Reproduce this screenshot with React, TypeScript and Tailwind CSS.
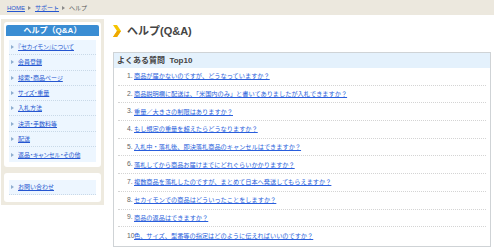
const MENU = [
  "『セカイモン』について",
  "会員登録",
  "検索・商品ページ",
  "サイズ・重量",
  "入札方法",
  "決済・手数料等",
  "配送",
  "返品・キャンセル・その他",
];

const FAQ = [
  "商品が届かないのですが、どうなっていますか？",
  "商品説明欄に配送は、「米国内のみ」と書いてありましたが入札できますか？",
  "重量／大きさの制限はありますか？",
  "もし規定の重量を超えたらどうなりますか？",
  "入札中・落札後、即決落札商品のキャンセルはできますか？",
  "落札してから商品お届けまでにどれぐらいかかりますか？",
  "複数商品を落札したのですが、まとめて日本へ発送してもらえますか？",
  "セカイモンでの商品はどういったことをしますか？",
  "商品の返品はできますか？",
  "色、サイズ、型番等の指定はどのように伝えればいいのですか？",
];

function Tri({ color }: { color: string }) {
  return (
    <svg width="3" height="4" viewBox="0 0 3 4" className="shrink-0">
      <polygon points="0,0 3,2 0,4" fill={color} />
    </svg>
  );
}

function MenuItem({ label, last }: { label: string; last?: boolean }) {
  return (
    <li className={`h-[15.3px] flex items-center gap-[4px] pl-[2px] ${last ? "" : "border-b border-dotted border-[#c9d9e8]"}`}>
      <Tri color="#8eaed0" />
      <a className="text-[6px] leading-none text-[#2556d0] underline [font-feature-settings:'palt']">{label}</a>
    </li>
  );
}

export default function App() {
  return (
    <div className="w-[494px] h-[252px] bg-white overflow-hidden font-['Liberation_Sans','Noto_Sans_CJK_JP',sans-serif]">
      <div className="h-[15px] bg-[#ece8de] flex items-center pl-[7px] gap-[3px] text-[6px] leading-none">
        <a className="text-[#2556d0] underline">HOME</a>
        <Tri color="#8a8a8a" />
        <a className="text-[#2556d0] underline ml-[1px]">サポート</a>
        <Tri color="#8a8a8a" />
        <span className="text-[#555] ml-[1px]">ヘルプ</span>
      </div>

      <div className="flex pt-[4px]">
        <aside className="ml-[1px] w-[103px] h-fit bg-[#eeeadf] p-[3px] flex flex-col gap-[6px]">
          <div className="bg-white rounded-[3px] px-[2px] pt-[3px] pb-[5px]">
            <div className="h-[11px] rounded-t-[2px] bg-[#3a8dd3] flex items-center justify-center text-white text-[8px] font-bold leading-none">
              ヘルプ（Q&amp;A）
            </div>
            <ul className="mt-[4px] mx-[3px] bg-[#edf6ff]">
              {MENU.map((m, i) => (
                <MenuItem key={m} label={m} last={i === MENU.length - 1} />
              ))}
            </ul>
          </div>
          <div className="bg-white rounded-[3px] px-[5px] py-[7px]">
            <ul className="bg-[#edf6ff] border-b border-dotted border-[#c9d9e8]">
              <li className="h-[14px] flex items-center gap-[4px] pl-[2px]">
                <Tri color="#8eaed0" />
                <a className="text-[6px] leading-none text-[#2556d0] underline">お問い合わせ</a>
              </li>
            </ul>
          </div>
        </aside>

        <main className="ml-[9px] w-[378px]">
          <div className="mt-[6px] flex items-center gap-[6px] h-[12px]">
            <svg width="8" height="12" viewBox="0 0 8 12">
              <polygon points="0,0 4,0 8,6 4,12 0,12 4,6" fill="#f5c400" />
              <polygon points="4,6 8,6 4,12 0,12" fill="#eea800" />
            </svg>
            <h1 className="text-[11px] font-bold text-[#444] leading-none">ヘルプ(Q&amp;A)</h1>
          </div>

          <div className="mt-[15px] border border-[#cfd3d6]">
            <div className="h-[15px] bg-[#e4f1fc] flex items-center pl-[3px] text-[8px] font-semibold text-[#444] leading-none">
              よくある質問&nbsp;&nbsp;Top10
            </div>
            <ol className="px-[4px] pb-[1px]">
              {FAQ.map((q, i) => (
                <li
                  key={q}
                  className={`h-[17.7px] flex items-center pl-[9px] text-[6.2px] leading-none ${i === FAQ.length - 1 ? "" : "border-b border-dotted border-[#d4d4d4]"}`}
                >
                  <span className="w-[7px] shrink-0 text-[6.8px] text-[#666]">{i + 1}{i < 9 ? "." : ""}</span>
                  <a className="text-[#2a5fdc] underline whitespace-nowrap">{q}</a>
                </li>
              ))}
            </ol>
          </div>
        </main>
      </div>
    </div>
  );
}
